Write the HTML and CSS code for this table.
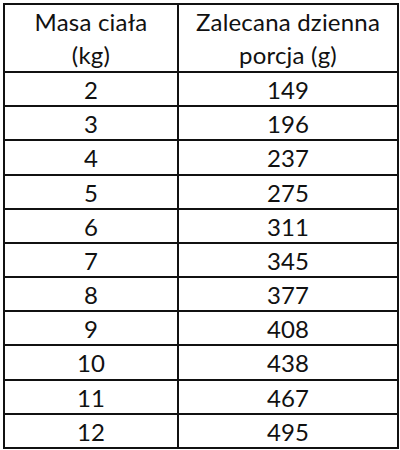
FILE: index.html
```html
<!DOCTYPE html>
<html lang="pl">
<head>
<meta charset="utf-8">
<link rel="stylesheet" href="styles.css">
</head>
<body>
<table class="dose">
  <thead>
    <tr><th class="c1">Masa ciała<br>(kg)</th><th class="c2">Zalecana dzienna<br>porcja (g)</th></tr>
  </thead>
  <tbody>
    <tr><td>2</td><td>149</td></tr>
    <tr><td>3</td><td>196</td></tr>
    <tr><td>4</td><td>237</td></tr>
    <tr><td>5</td><td>275</td></tr>
    <tr><td>6</td><td>311</td></tr>
    <tr><td>7</td><td>345</td></tr>
    <tr><td>8</td><td>377</td></tr>
    <tr><td>9</td><td>408</td></tr>
    <tr><td>10</td><td>438</td></tr>
    <tr><td>11</td><td>467</td></tr>
    <tr><td>12</td><td>495</td></tr>
  </tbody>
</table>
</body>
</html>
```
FILE: styles.css
```css
html, body {
  margin: 0;
  padding: 0;
  background: #fff;
}
.dose {
  margin: 3px 0 0 3px;
  border-collapse: separate;
  border-spacing: 0;
  border-left: 2px solid #111;
  border-top: 2px solid #111;
  table-layout: fixed;
  width: 396px;
  font-family: Lato, "Open Sans", sans-serif;
  font-size: 24px;
  color: #111;
}
.dose th, .dose td {
  border-right: 2px solid #111;
  border-bottom: 2px solid #111;
  padding: 0;
  text-align: center;
  font-weight: normal;
}
.dose th {
  height: 66px;
  line-height: 33px;
  vertical-align: middle;
  letter-spacing: 0.2px;
}
.dose .c1 { width: 172px; }
.dose .c2 { width: 218px; }
.dose td {
  height: 31.18px;
  padding-top: 1px;
  line-height: 31px;
  vertical-align: middle;
}
```
